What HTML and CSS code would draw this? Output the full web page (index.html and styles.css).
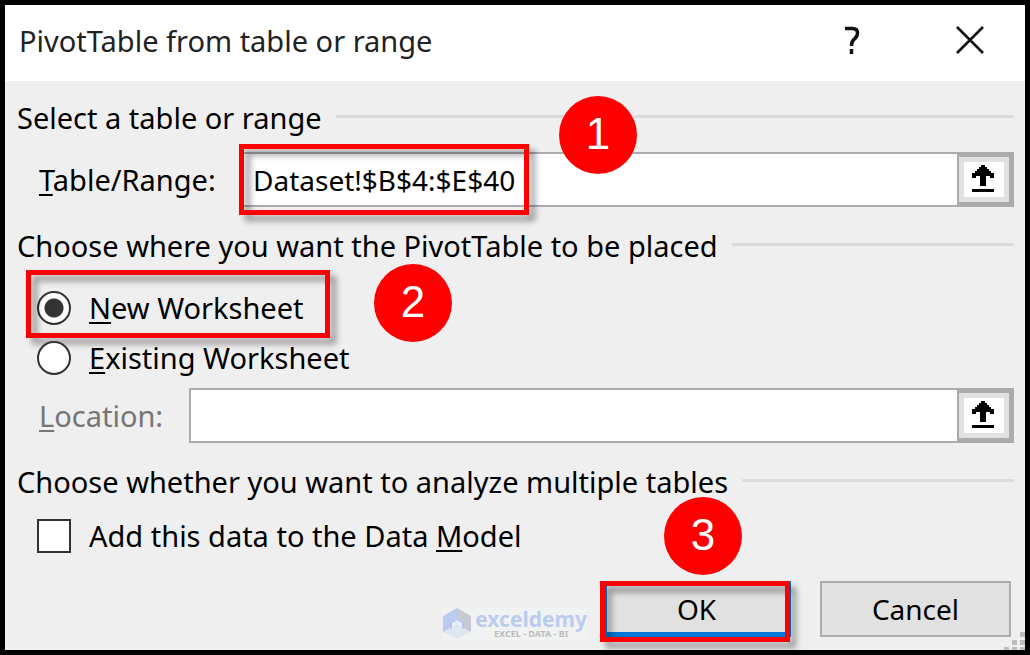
FILE: index.html
```html
<!DOCTYPE html>
<html lang="en">
<head>
<meta charset="utf-8">
<title>PivotTable from table or range</title>
<link rel="stylesheet" href="styles.css">
</head>
<body>
<form class="dialog">
  <header class="titlebar">
    <h1 class="title">PivotTable from table or range</h1>
    <button class="title-button" type="button" aria-label="Help">
      <svg width="16" height="28" viewBox="0 0 16 28" fill="none" stroke="#111" stroke-width="3.500"><path d="M1 2.500H8.500Q13.500 2.500 13.500 7Q13.500 10 11 12.500Q7.500 15 7.500 20M7.500 23V28"/></svg>
    </button>
    <button class="title-button" type="button" aria-label="Close">
      <svg width="28" height="28" viewBox="0 0 28 28" fill="none" stroke="#111" stroke-width="2.600"><path d="M1 1L27 27M27 1L1 27"/></svg>
    </button>
  </header>
  <main class="content">
    <section>
      <h2 class="heading">Select a table or range</h2>
      <div class="field source">
        <label class="field-label" for="range"><u>T</u>able/Range:</label>
        <div class="picker">
          <input class="picker-input" id="range" type="text" value="Dataset!$B$4:$E$40">
          <button class="picker-button" type="button" aria-label="Select range">
            <svg width="22" height="28" viewBox="0 0 22 28"><path d="M9 1H13V3H15V5H17V7H19V9H22V14H18V12H14V22H8V12H4V14H0V9H3V7H5V5H7V3H9ZM0 25H22V28H0Z"/></svg>
          </button>
          <span class="callout callout-range"></span>
          <span class="badge badge-range">1</span>
        </div>
      </div>
    </section>
    <section>
      <h2 class="heading">Choose where you want the PivotTable to be placed</h2>
      <div class="choices">
        <div class="choice-row">
          <label class="choice"><input class="radio" type="radio" name="place" checked><span><u>N</u>ew Worksheet</span></label>
          <span class="callout callout-sheet"></span>
          <span class="badge badge-sheet">2</span>
        </div>
        <div class="choice-row">
          <label class="choice"><input class="radio" type="radio" name="place"><span><u>E</u>xisting Worksheet</span></label>
        </div>
      </div>
      <div class="field location">
        <label class="field-label muted" for="location"><u>L</u>ocation:</label>
        <div class="picker">
          <input class="picker-input" id="location" type="text">
          <button class="picker-button" type="button" aria-label="Select location">
            <svg width="22" height="28" viewBox="0 0 22 28"><path d="M9 1H13V3H15V5H17V7H19V9H22V14H18V12H14V22H8V12H4V14H0V9H3V7H5V5H7V3H9ZM0 25H22V28H0Z"/></svg>
          </button>
        </div>
      </div>
    </section>
    <section>
      <h2 class="heading">Choose whether you want to analyze multiple tables</h2>
      <div class="choice-row model">
        <label class="choice"><input class="checkbox" type="checkbox"><span>Add this data to the Data <u>M</u>odel</span></label>
      </div>
    </section>
    <footer class="footer">
      <div class="brand">
        <svg width="28" height="32" viewBox="0 0 28 32"><path fill="#bccaf0" d="M14 0L0 8V24L7 27V14L14 10Z"/><path fill="#c6cad2" d="M14 0L28 8V24L21 21V14L14 10Z"/><path fill="#dce8ee" d="M7 20L14 16L28 24L14 31L0 24Z"/><path fill="#b4c4ee" d="M14 10L21 14V21L14 17L7 21V14Z"/><path fill="#e6edf4" d="M14 12L19 15V20L14 17L9 20V15Z"/></svg>
        <div class="brand-text">
          <span class="brand-name">exceldemy</span>
          <span class="brand-tag">EXCEL - DATA - BI</span>
        </div>
      </div>
      <div class="ok-wrap">
        <button class="action ok" type="submit">OK</button>
        <span class="callout callout-ok"></span>
        <span class="badge badge-ok">3</span>
      </div>
      <button class="action" type="button">Cancel</button>
    </footer>
    <svg class="grip" width="21" height="20" viewBox="0 0 21 20" fill="#bdbdbd"><path d="M16 2h5v5h-5zM8 10h5v5H8zM16 10h5v5h-5zM0 17h5v3H0zM8 17h5v3H8zM16 17h5v3h-5z"/></svg>
  </main>
</form>
</body>
</html>
```
FILE: styles.css
```css
* { box-sizing: border-box; }

body {
  margin: 0;
  font-family: "Noto Sans", "Open Sans", sans-serif;
  font-size: 29px;
  line-height: 36px;
  color: #000;
}

button, input { font: inherit; color: inherit; margin: 0; }

u {
  text-decoration-thickness: 2px;
  text-underline-offset: 3px;
  text-decoration-skip-ink: none;
}

.dialog {
  display: flex;
  flex-direction: column;
  min-height: 100vh;
  border: 5px solid #000;
  background: #efefef;
}

.titlebar {
  display: flex;
  align-items: center;
  height: 76px;
  padding: 0 27px 0 14px;
  gap: 62px;
  background: #fff;
}

.title {
  flex: 1;
  margin: 0;
  padding-bottom: 4px;
  font-size: 29px;
  font-weight: 400;
  color: #222;
}

.title-button {
  display: flex;
  justify-content: center;
  width: 56px;
  padding: 0 0 7px;
  border: 0;
  background: none;
}

.content {
  position: relative;
  flex: 1;
  padding: 19px 11px 13px 12px;
}

.heading {
  display: flex;
  align-items: center;
  gap: 14px;
  margin: 0;
  font-size: 29px;
  font-weight: 400;
  white-space: nowrap;
}

.heading::after {
  content: "";
  flex: 1;
  height: 3px;
  margin-bottom: 3px;
  background: #dcdcdc;
}

.field {
  display: grid;
  align-items: center;
  padding-left: 22px;
}

.source { grid-template-columns: 200px 1fr; margin: 16px 0 21px; }
.location { grid-template-columns: 150px 1fr; margin: 5px 0 21px; }
.muted { color: #767676; }

.picker {
  position: relative;
  display: flex;
  height: 55px;
}

.picker-input {
  flex: 1;
  min-width: 0;
  padding: 0 12px;
  border: 2px solid #ababb0;
  border-right: 0;
  border-radius: 0;
  background: #fff;
  font-size: 28px;
  outline: 0;
}

.picker-button {
  display: flex;
  align-items: center;
  justify-content: center;
  width: 57px;
  padding: 0 3px 3px 0;
  border: 5px solid #ababad;
  border-left-width: 2px;
  background: #fff;
  box-shadow: inset 0 0 0 5px #e1e1e1;
}

.choices { margin-top: 19px; }

.choice-row {
  position: relative;
  display: flex;
  align-items: center;
  height: 50px;
  padding-left: 20px;
}

.model { margin: 11px 0 20px; }

.choice {
  display: flex;
  align-items: center;
  gap: 18px;
}

.radio, .checkbox {
  appearance: none;
  width: 34px;
  height: 34px;
  border: 2px solid #333;
  background: #fff;
}

.radio { border-radius: 50%; }
.radio:checked { background: radial-gradient(circle, #333 9px, #fff 10px); }

.footer {
  display: flex;
  align-items: center;
  justify-content: flex-end;
  height: 56px;
  padding-right: 3px;
}

.brand {
  display: flex;
  align-items: center;
  align-self: flex-end;
  gap: 4px;
  margin: 0 15px -3px 0;
  height: 32px;
  background: #f1f3f3;
}

.brand-text {
  display: flex;
  flex-direction: column;
  align-items: center;
}

.brand-name {
  font-size: 21px;
  font-weight: 700;
  line-height: 20px;
  color: #bccbf0;
}

.brand-tag {
  font-size: 9px;
  font-weight: 700;
  line-height: 10px;
  color: #bcbcbc;
}

.ok-wrap { position: relative; margin-right: 29px; }

.action {
  display: block;
  width: 191px;
  height: 56px;
  padding: 0;
  border: 2px solid #adadad;
  background: #e1e1e1;
  font-size: 28px;
}

.ok { width: 189px; border: 5px solid #0078d7; }

.callout {
  position: absolute;
  border: 5px solid #f00;
  filter: drop-shadow(6px 6px 3px rgba(0, 0, 0, 0.4));
  pointer-events: none;
}

.callout-range { left: 0; top: -8px; width: 290px; height: 71px; }
.callout-sheet { left: 9px; top: -13px; width: 304px; height: 68px; }
.callout-ok { left: -2px; top: 0; width: 190px; height: 61px; }

.badge {
  position: absolute;
  width: 78px;
  height: 78px;
  border-radius: 50%;
  background: #f00;
  color: #fff;
  font-family: "Liberation Sans", Arial, sans-serif;
  font-size: 44px;
  line-height: 76px;
  text-align: center;
}

.badge-range { left: 320px; top: -56px; }
.badge-sheet { left: 357px; top: -19px; }
.badge-ok { left: 62px; top: -84px; }

.grip { position: absolute; right: 0; bottom: 0; }
```
